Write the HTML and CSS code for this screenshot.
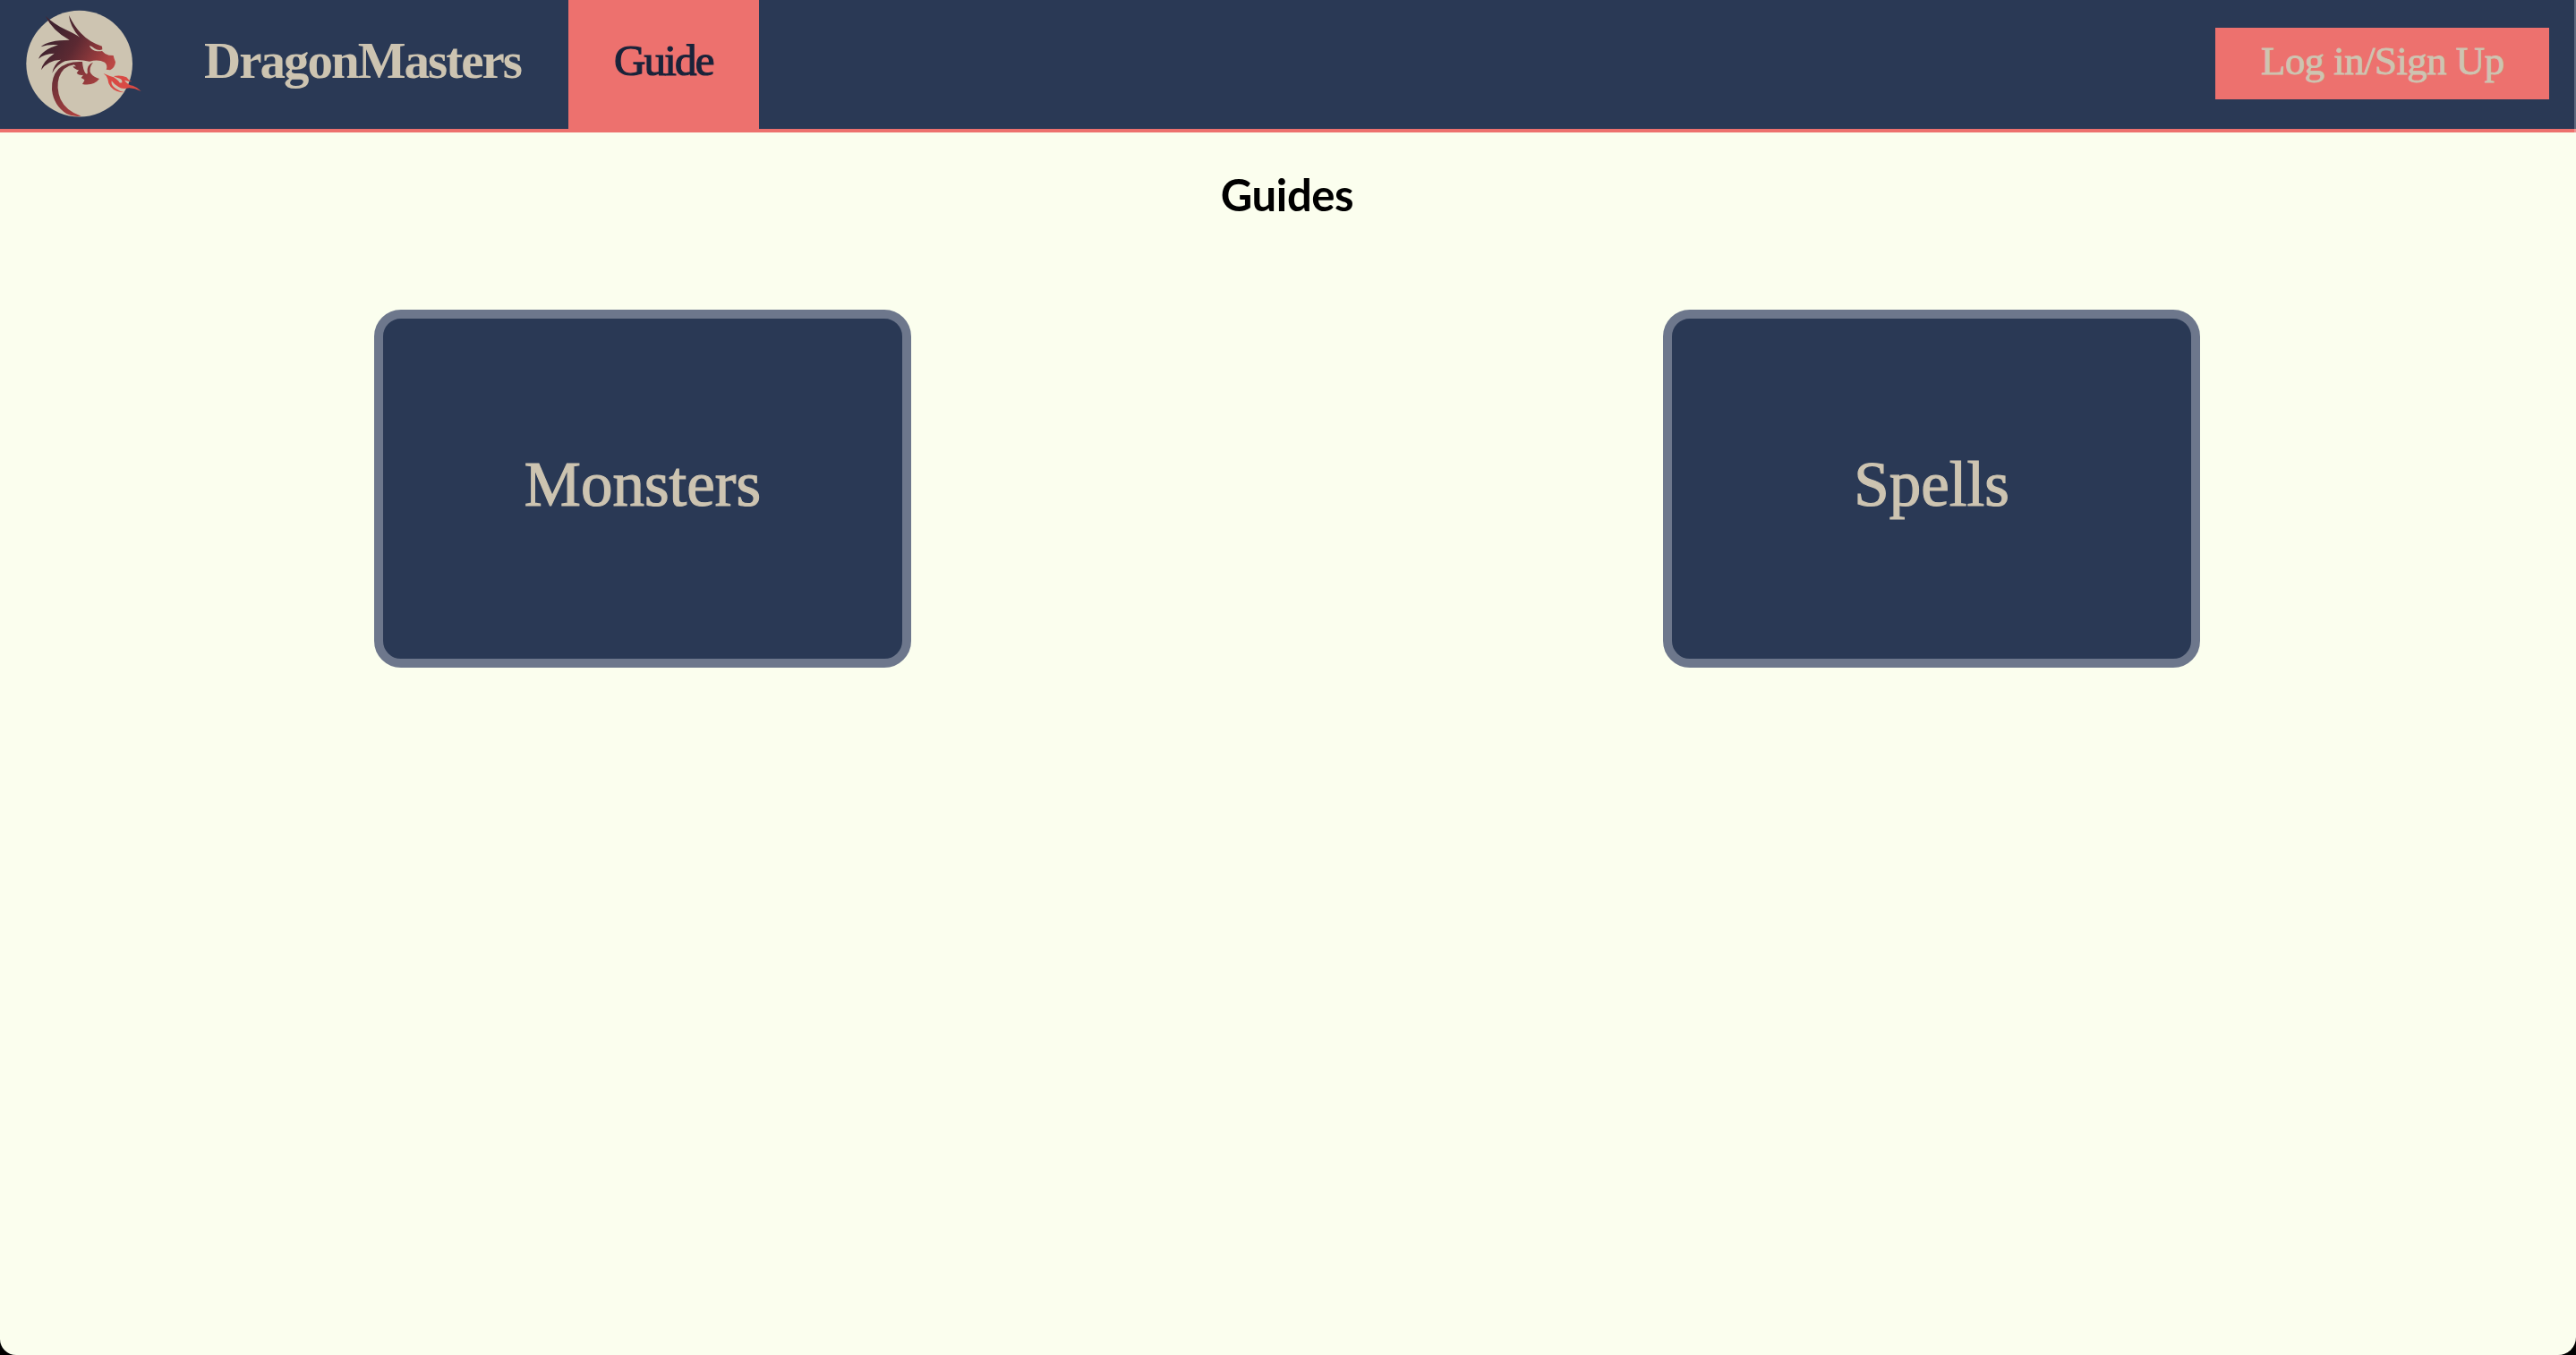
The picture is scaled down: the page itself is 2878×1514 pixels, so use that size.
FILE: index.html
```html
<!DOCTYPE html>
<html lang="en">
<head>
<meta charset="utf-8">
<title>DragonMasters</title>
<link rel="stylesheet" href="styles.css">
</head>
<body>
<div class="page">
  <header class="navbar">
    <a class="logo" aria-label="Home">
      <svg viewBox="0 0 540 432" width="180" height="144">
        <defs>
          <linearGradient id="scales" gradientUnits="userSpaceOnUse" x1="190" y1="110" x2="370" y2="220">
            <stop offset="0" stop-color="#43242f"/>
            <stop offset=".35" stop-color="#5c2932"/>
            <stop offset="1" stop-color="#bb4744"/>
          </linearGradient>
          <linearGradient id="tail" gradientUnits="userSpaceOnUse" x1="190" y1="210" x2="330" y2="330">
            <stop offset="0" stop-color="#5c2c34"/>
            <stop offset="1" stop-color="#b84442"/>
          </linearGradient>
        </defs>
        <circle cx="266" cy="213.500" r="178" fill="#cdc4b1"/>
        <path fill="url(#scales)" d="M152 53Q180 80 221 100Q250 113 267 125Q234 89 231 51Q248 87 271 111Q300 142 342 155L343 166Q330 171 316 162Q308 155 300 153Q304 166 318 170Q330 173 342 171Q350 181 365 185L380 186Q382 196 387 208Q386 226 369 235L356 233Q362 219 351 209Q330 198 300 206Q260 196 218 205Q190 216 175 245Q179 217 204 200Q158 203 138 235Q142 206 182 179Q148 180 129 197Q140 168 195 151Q164 148 137 157Q161 134 233 134Q177 104 152 53Z"/>
        <path fill="url(#tail)" d="M276 207Q225 204 196 231Q172 256 174 301Q180 355 224 382Q246 393 272 389Q222 373 203 333Q187 294 198 259Q211 222 248 217L255 223L244 223Q252 234 264 235L257 245Q266 254 279 251L272 261Q285 267 283 270L276 282Q314 289 333 264Q315 260 305 247Q295 230 312 209Q290 218 293 241Q295 251 287 246Q278 235 276 207Z"/>
        <path fill="#d94a44" d="M347 246Q367 255 381 259Q397 270 400 276Q402 279 409 277Q411 265 397 262Q387 259 381 255Q405 250 424 259Q430 269 442 274Q429 273 417 269Q429 285 445 287Q461 292 473 306Q452 296 433 295Q408 301 397 291Q383 284 374 271Q371 286 388 297Q400 306 419 310Q387 310 371 291Q362 280 361 265Q358 254 347 246Z"/>
      </svg>
    </a>
    <a class="brand">DragonMasters</a>
    <a class="tab">Guide</a>
    <a class="login">Log in/Sign Up</a>
  </header>
  <main>
    <h1>Guides</h1>
    <div class="cards">
      <a class="card monsters">Monsters</a>
      <a class="card spells">Spells</a>
    </div>
  </main>
  <div class="edge"></div>
</div>
</body>
</html>
```
FILE: styles.css
```css
* { box-sizing: border-box; }
html { background: #000; }
body { margin: 0; }
.page {
  position: relative;
  height: 1514px;
  overflow: hidden;
  background: #fbfeee;
  border-radius: 0 0 20px 18px;
}
.navbar {
  display: flex;
  height: 148px;
  background: #2a3955;
  border-bottom: 4px solid #ed716e;
  font-family: "Liberation Serif", serif;
  line-height: 136px;
  white-space: nowrap;
}
.logo { width: 180px; height: 144px; }
.logo svg { display: block; }
.brand {
  width: 455px;
  padding-left: 48px;
  color: #cdc4b1;
  font-size: 57px;
  font-weight: bold;
  letter-spacing: -2px;
}
.tab {
  width: 213px;
  height: 144px;
  padding-left: 51px;
  background: #ed716e;
  color: #19233a;
  font-size: 49px;
  letter-spacing: -1.8px;
  -webkit-text-stroke: 1.2px #19233a;
}
.login {
  width: 373px;
  height: 80px;
  margin: 31px 30px 0 auto;
  padding-left: 51px;
  background: #ed716e;
  color: #cdc4b1;
  font-size: 45px;
  line-height: 75px;
  letter-spacing: -.6px;
  -webkit-text-stroke: .8px #cdc4b1;
}
h1 {
  width: 2876px;
  height: 198px;
  margin: 0;
  padding-top: 39px;
  font: bold 49px/60px Lato, sans-serif;
  letter-spacing: -.4px;
  text-align: center;
}
.cards {
  display: grid;
  grid-template-columns: 1436px 1444px;
  justify-items: center;
}
.card {
  width: 600px;
  height: 400px;
  border: 10px solid #6d778c;
  border-radius: 30px;
  background: #2a3955;
  color: #cdc4b1;
  font-family: "Liberation Serif", serif;
  font-size: 71px;
  line-height: 370px;
  text-align: center;
  -webkit-text-stroke: 1.2px #cdc4b1;
}
/* translucent scrollbar track laid over the right side */
.edge {
  position: absolute;
  top: 0;
  right: 0;
  width: 2px;
  height: 148px;
  background: rgba(255, 255, 255, .25);
}
```
